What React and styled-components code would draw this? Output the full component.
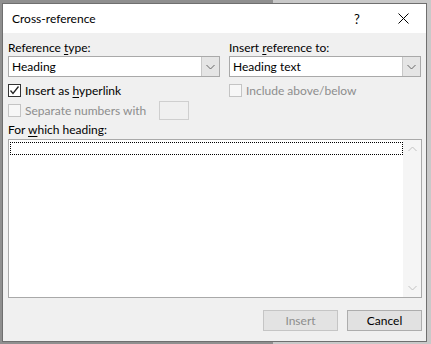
import React from "react";
import styled, { createGlobalStyle } from "styled-components";

const Global = createGlobalStyle`
  html, body { margin: 0; padding: 0; }
  body { font-family: Lato, "Noto Sans", sans-serif; }
`;

const Page = styled.div`
  width: 431px;
  height: 344px;
  box-sizing: border-box;
  padding: 3px 0 0 2px;
  background: linear-gradient(to right, #8f8f8f 0, #8f8f8f 273px, #c9c9c9 273px);
  overflow: hidden;
`;

const Window = styled.div`
  width: 425px;
  height: 339px;
  box-sizing: border-box;
  border: 1px solid #6f6f6f;
  display: flex;
  flex-direction: column;
  background: #f0f0f0;
  font-size: 12px;
  color: #000;
`;

const TitleBar = styled.div`
  height: 29px;
  flex: none;
  background: #fff;
  display: flex;
  align-items: center;
  padding-left: 9px;
`;

const Title = styled.div`
  flex: 1;
  font-size: 12px;
  margin-top: -1px;
`;

const TitleButton = styled.div`
  width: ${(p) => p.w}px;
  height: 29px;
  display: flex;
  align-items: center;
  justify-content: center;
  font-size: 13px;
  color: #000;
`;

const Body = styled.div`
  flex: 1;
  display: flex;
  flex-direction: column;
  padding: 7px 4px 9px 5px;
`;

const Columns = styled.div`
  display: grid;
  grid-template-columns: 212px 192px;
  column-gap: 9px;
`;

const Column = styled.div`
  display: flex;
  flex-direction: column;
`;

const Label = styled.div`
  height: 15px;
  line-height: 15px;
  flex: none;
  margin-top: ${(p) => p.mt || 0}px;
  margin-bottom: ${(p) => p.mb || 0}px;
  color: ${(p) => (p.disabled ? "#8d8d8d" : "#000")};
  white-space: nowrap;
`;

const Select = styled.div`
  height: 21px;
  box-sizing: border-box;
  border: 1px solid #a9a9a9;
  background: #fff;
  display: flex;
  align-items: stretch;
`;

const SelectText = styled.div`
  flex: 1;
  line-height: 19px;
  padding-left: 3px;
`;

const DropButton = styled.div`
  width: 17px;
  background: #e5e5e5;
  border-left: 1px solid #c8c8c8;
  display: flex;
  align-items: center;
  justify-content: center;
`;

const CheckRow = styled.div`
  display: flex;
  align-items: center;
  height: 17px;
  margin-top: ${(p) => p.mt || 0}px;
  gap: 4px;
  color: ${(p) => (p.disabled ? "#8d8d8d" : "#000")};
  white-space: nowrap;
`;

const Box = styled.div`
  width: 13px;
  height: 13px;
  box-sizing: border-box;
  border: 1px solid ${(p) => (p.disabled ? "#c4c4c4" : "#333")};
  background: ${(p) => (p.disabled ? "#f7f7f7" : "#fff")};
  display: flex;
  align-items: center;
  justify-content: center;
  flex: none;
`;

const SmallInput = styled.div`
  width: 30px;
  height: 19px;
  box-sizing: border-box;
  border: 1px solid #cfcfcf;
  background: #f0f0f0;
  margin-left: 9px;
`;

const U = styled.span`
  text-decoration: underline;
  text-underline-offset: 2px;
`;

const List = styled.div`
  height: 159px;
  flex: none;
  box-sizing: border-box;
  border: 1px solid #a9a9a9;
  background: #fff;
  display: flex;
  margin-top: 2px;
`;

const ListItems = styled.div`
  flex: 1;
  padding: 2px 0 0 1px;
`;

const FocusItem = styled.div`
  height: 11px;
  border: 1px dotted #000;
`;

const ScrollBar = styled.div`
  width: 18px;
  background: #f5f5f5;
  display: flex;
  flex-direction: column;
  justify-content: space-between;
  align-items: center;
  padding: 6px 0;
`;

const Footer = styled.div`
  display: flex;
  justify-content: flex-end;
  gap: 9px;
  margin-top: 12px;
`;

const Button = styled.div`
  width: 75px;
  height: 21px;
  box-sizing: border-box;
  border: 1px solid ${(p) => (p.disabled ? "#c5c5c5" : "#adadad")};
  background: ${(p) => (p.disabled ? "#e3e3e3" : "#e1e1e1")};
  color: ${(p) => (p.disabled ? "#8d8d8d" : "#000")};
  display: flex;
  align-items: center;
  justify-content: center;
`;

const Chevron = ({ up, color = "#666" }) => (
  <svg width="9" height="6" viewBox="0 0 9 6">
    <path
      d={up ? "M0.5 5 L4.5 1 L8.5 5" : "M0.5 1 L4.5 5 L8.5 1"}
      fill="none"
      stroke={color}
      strokeWidth="1"
    />
  </svg>
);

const CloseIcon = () => (
  <svg width="11" height="11" viewBox="0 0 11 11">
    <path d="M0.5 0.5 L10.5 10.5 M10.5 0.5 L0.5 10.5" stroke="#000" strokeWidth="1" />
  </svg>
);

const CheckMark = () => (
  <svg width="11" height="11" viewBox="0 0 11 11">
    <path d="M1.5 5.5 L4 8.5 L9.5 1.5" fill="none" stroke="#222" strokeWidth="1.3" />
  </svg>
);

export default function App() {
  return (
    <>
      <Global />
      <Page>
        <Window>
          <TitleBar>
            <Title>Cross-reference</Title>
            <TitleButton w={46}>?</TitleButton>
            <TitleButton w={46}>
              <CloseIcon />
            </TitleButton>
          </TitleBar>
          <Body>
            <Columns>
              <Column>
                <Label mb={1}>
                  Reference <U>t</U>ype:
                </Label>
                <Select>
                  <SelectText>Heading</SelectText>
                  <DropButton>
                    <Chevron />
                  </DropButton>
                </Select>
                <CheckRow mt={5}>
                  <Box>
                    <CheckMark />
                  </Box>
                  <span>
                    Insert as <U>h</U>yperlink
                  </span>
                </CheckRow>
                <CheckRow mt={3} disabled>
                  <Box disabled />
                  <span>Separate numbers with</span>
                  <SmallInput />
                </CheckRow>
              </Column>
              <Column>
                <Label mb={1}>
                  Insert <U>r</U>eference to:
                </Label>
                <Select>
                  <SelectText>Heading text</SelectText>
                  <DropButton>
                    <Chevron />
                  </DropButton>
                </Select>
                <CheckRow mt={5} disabled>
                  <Box disabled />
                  <span>Include above/below</span>
                </CheckRow>
              </Column>
            </Columns>
            <Label mt={3}>
              For <U>w</U>hich heading:
            </Label>
            <List>
              <ListItems>
                <FocusItem />
              </ListItems>
              <ScrollBar>
                <Chevron up color="#c2c2c2" />
                <Chevron color="#c2c2c2" />
              </ScrollBar>
            </List>
            <Footer>
              <Button disabled>Insert</Button>
              <Button>Cancel</Button>
            </Footer>
          </Body>
        </Window>
      </Page>
    </>
  );
}
